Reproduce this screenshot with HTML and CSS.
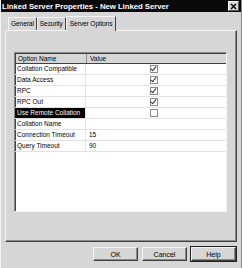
FILE: index.html
```html
<!DOCTYPE html>
<html lang="en">
<head>
  <meta charset="UTF-8" />
  <title>Linked Server Properties</title>
  <link rel="stylesheet" href="styles.css">
</head>
<body>
  <div class="window">
    <!-- Title bar -->
    <div class="titlebar">
      <span class="title">Linked Server Properties - New Linked Server</span>
      <span class="close">
        <svg width="7" height="7" viewBox="0 0 7 7"><path d="M1 1L6 6M6 1L1 6" stroke="#000" stroke-width="1.4"/></svg>
      </span>
    </div>

    <!-- Tabs -->
    <div class="tabs">
      <div class="tab">General</div>
      <div class="tab">Security</div>
      <div class="tab active">Server Options</div>
    </div>

    <!-- Tab panel -->
    <div class="panel">
      <div class="grid">
        <div class="row head">
          <div class="cell name">Option Name</div>
          <div class="cell value">Value</div>
        </div>
        <div class="row">
          <div class="cell name">Collation Compatible</div>
          <div class="cell value check"><span class="box on"></span></div>
        </div>
        <div class="row">
          <div class="cell name">Data Access</div>
          <div class="cell value check"><span class="box on"></span></div>
        </div>
        <div class="row">
          <div class="cell name">RPC</div>
          <div class="cell value check"><span class="box on"></span></div>
        </div>
        <div class="row">
          <div class="cell name">RPC Out</div>
          <div class="cell value check"><span class="box on"></span></div>
        </div>
        <div class="row">
          <div class="cell name selected">Use Remote Collation</div>
          <div class="cell value check"><span class="box"></span></div>
        </div>
        <div class="row">
          <div class="cell name">Collation Name</div>
          <div class="cell value"></div>
        </div>
        <div class="row">
          <div class="cell name">Connection Timeout</div>
          <div class="cell value">15</div>
        </div>
        <div class="row">
          <div class="cell name">Query Timeout</div>
          <div class="cell value">90</div>
        </div>
      </div>
    </div>

    <!-- Dialog buttons -->
    <div class="buttons">
      <button class="btn">OK</button>
      <button class="btn">Cancel</button>
      <button class="btn default">Help</button>
    </div>
  </div>
</body>
</html>
```

FILE: styles.css
```css
:root {
  --face: #d6d6d6;
  --light: #f4f4f4;
  --shadow: #8a8a8a;
  --dark: #404040;
  --font: 'Liberation Sans', Arial, sans-serif;
}

body {
  margin: 0;
  background: var(--face);
  font-family: var(--font);
}

.window {
  width: 242px;
  height: 268px;
  box-sizing: border-box;
  display: flex;
  flex-direction: column;
  background: var(--face);
  border-left: 1px solid var(--light);
  border-right: 1px solid var(--shadow);
}

/* Title bar */
.titlebar {
  height: 12px;
  background: #0a0a0a;
  display: flex;
  align-items: center;
  justify-content: space-between;
  padding: 0 2px 0 1px;
}
.title {
  color: #fff;
  font-weight: bold;
  font-size: 7.8px;
  letter-spacing: -0.05px;
}
.close {
  width: 9px;
  height: 8px;
  background: var(--face);
  display: flex;
  align-items: center;
  justify-content: center;
  border: 1px solid;
  border-color: #fff #555 #555 #fff;
}

/* Tabs */
.tabs {
  display: flex;
  align-items: flex-end;
  height: 18px;
  padding-left: 7px;
}
.tab {
  height: 12px;
  padding: 0 2px;
  font-size: 6.6px;
  line-height: 12px;
  letter-spacing: -0.1px;
  border-top: 1px solid var(--light);
  border-left: 1px solid var(--light);
  border-right: 1px solid var(--dark);
}
.tab.active {
  height: 14px;
  line-height: 13px;
  padding: 0 3px;
  margin-bottom: -1px;
  position: relative;
  background: var(--face);
}

.panel {
  margin: 0 4px 0 4px;
  height: 212px;
  border: 1px solid;
  border-color: var(--light) var(--dark) var(--dark) var(--light);
  box-shadow: inset -1px -1px 0 var(--shadow);
  padding: 21px 0 0 8px;
  box-sizing: border-box;
}

/* Options grid */
.grid {
  width: 213px;
  height: 160px;
  background: #fff;
  box-sizing: border-box;
  border: 1px solid;
  border-color: var(--shadow) var(--light) var(--light) var(--shadow);
  box-shadow: inset 1px 1px 0 var(--dark);
}
.row {
  display: flex;
  height: 11px;
  border-bottom: 1px solid #e2e2e2;
  box-sizing: border-box;
  font-size: 6.5px;
}
.row.head {
  height: 10px;
  background: var(--face);
  border-bottom: 1px solid var(--dark);
  margin: 1px 0 0 1px;
}
.cell {
  line-height: 10px;
  padding-left: 2px;
  box-sizing: border-box;
  white-space: nowrap;
}
.name {
  width: 71px;
  border-right: 1px solid #e2e2e2;
}
.head .name {
  border-right: 1px solid var(--shadow);
}
.value {
  flex: 1;
  padding-left: 3px;
}
.check {
  display: flex;
  align-items: center;
  padding-left: 64px;
}
.selected {
  background: #000;
  color: #fff;
}
.box {
  width: 6px;
  height: 6px;
  border: 1px solid #8a8a8a;
  background: #fff;
  position: relative;
}
.box.on::after {
  content: "";
  position: absolute;
  left: 1px;
  top: -1px;
  width: 2px;
  height: 5px;
  border: solid #333;
  border-width: 0 1.5px 1.5px 0;
  transform: rotate(40deg);
}

/* Buttons */
.buttons {
  flex: 1;
  display: flex;
  justify-content: flex-end;
  align-items: center;
  gap: 4px;
  padding: 0 5px 2px 0;
}
.btn {
  width: 45px;
  height: 14px;
  padding: 0;
  font-family: var(--font);
  font-size: 7px;
  background: var(--face);
  border: 1px solid;
  border-color: var(--light) var(--dark) var(--dark) var(--light);
  box-shadow: inset -1px -1px 0 var(--shadow);
}
.btn.default {
  outline: 1px solid #222;
}
```
